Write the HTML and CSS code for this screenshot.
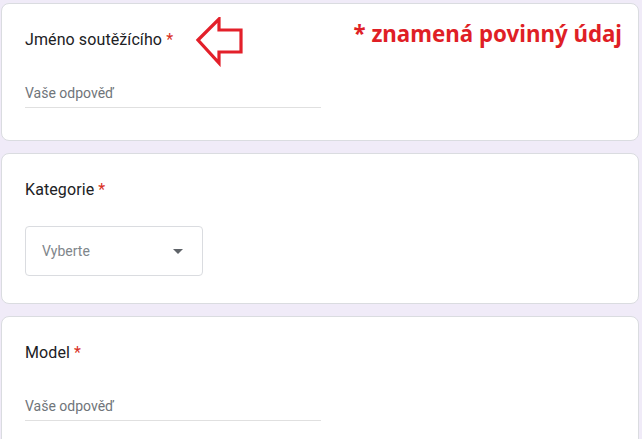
FILE: index.html
```html
<!DOCTYPE html>
<html lang="cs">
<head>
<meta charset="utf-8">
<link rel="stylesheet" href="styles.css">
</head>
<body>
<div class="page">
  <div class="card">
    <div class="title">Jméno soutěžícího <span class="req">*</span></div>
    <div class="text-input">Vaše odpověď</div>
    <svg class="arrow" width="50" height="50" viewBox="0 0 50 50">
      <polygon points="3,23 24,2 24,13 46,13 46,35 24,35 24,46" fill="none" stroke="#e3202a" stroke-width="3.2" stroke-linejoin="miter"/>
    </svg>
    <div class="note">* znamená povinný údaj</div>
  </div>
  <div class="card card-select">
    <div class="title">Kategorie <span class="req">*</span></div>
    <div class="select">
      <span class="select-text">Vyberte</span>
      <span class="caret"></span>
    </div>
  </div>
  <div class="card">
    <div class="title">Model <span class="req">*</span></div>
    <div class="text-input">Vaše odpověď</div>
  </div>
</div>
</body>
</html>
```

FILE: styles.css
```css
html, body {
  margin: 0;
  padding: 0;
  background: #f0ebf8;
  overflow: hidden;
}
.page {
  padding: 3px 3px 0 1px;
  display: flex;
  flex-direction: column;
  gap: 12px;
}
.card {
  position: relative;
  background: #fff;
  border: 1px solid #dadce0;
  border-radius: 8px;
  padding: 24px 24px 32px 23px;
}
.card-select {
  padding-bottom: 27px;
}
.title {
  font-family: Roboto, "Liberation Sans", sans-serif;
  font-size: 16px;
  line-height: 24px;
  color: #202124;
  letter-spacing: 0.1px;
}
.req {
  color: #d93025;
}
.text-input {
  margin-top: 29px;
  width: 296px;
  font-family: Roboto, "Liberation Sans", sans-serif;
  font-size: 14px;
  line-height: 24px;
  color: #70757a;
  padding-bottom: 2px;
  border-bottom: 1px solid #e0e0e0;
}
.select {
  margin-top: 24px;
  width: 178px;
  height: 50px;
  border: 1px solid #dadce0;
  border-radius: 4px;
  display: flex;
  align-items: center;
  justify-content: space-between;
  padding: 0 19px 0 16px;
  box-sizing: border-box;
}
.select-text {
  font-family: Roboto, "Liberation Sans", sans-serif;
  font-size: 14px;
  color: #80868b;
}
.caret {
  width: 0;
  height: 0;
  border-left: 5px solid transparent;
  border-right: 5px solid transparent;
  border-top: 5px solid #5f6368;
  margin-top: 1px;
}
.arrow {
  position: absolute;
  left: 193px;
  top: 13px;
}
.note {
  position: absolute;
  right: 16px;
  top: 15px;
  font-family: "Noto Sans", "Open Sans", sans-serif;
  font-weight: bold;
  font-size: 22.3px;
  line-height: 30px;
  color: #df1f26;
}
```
